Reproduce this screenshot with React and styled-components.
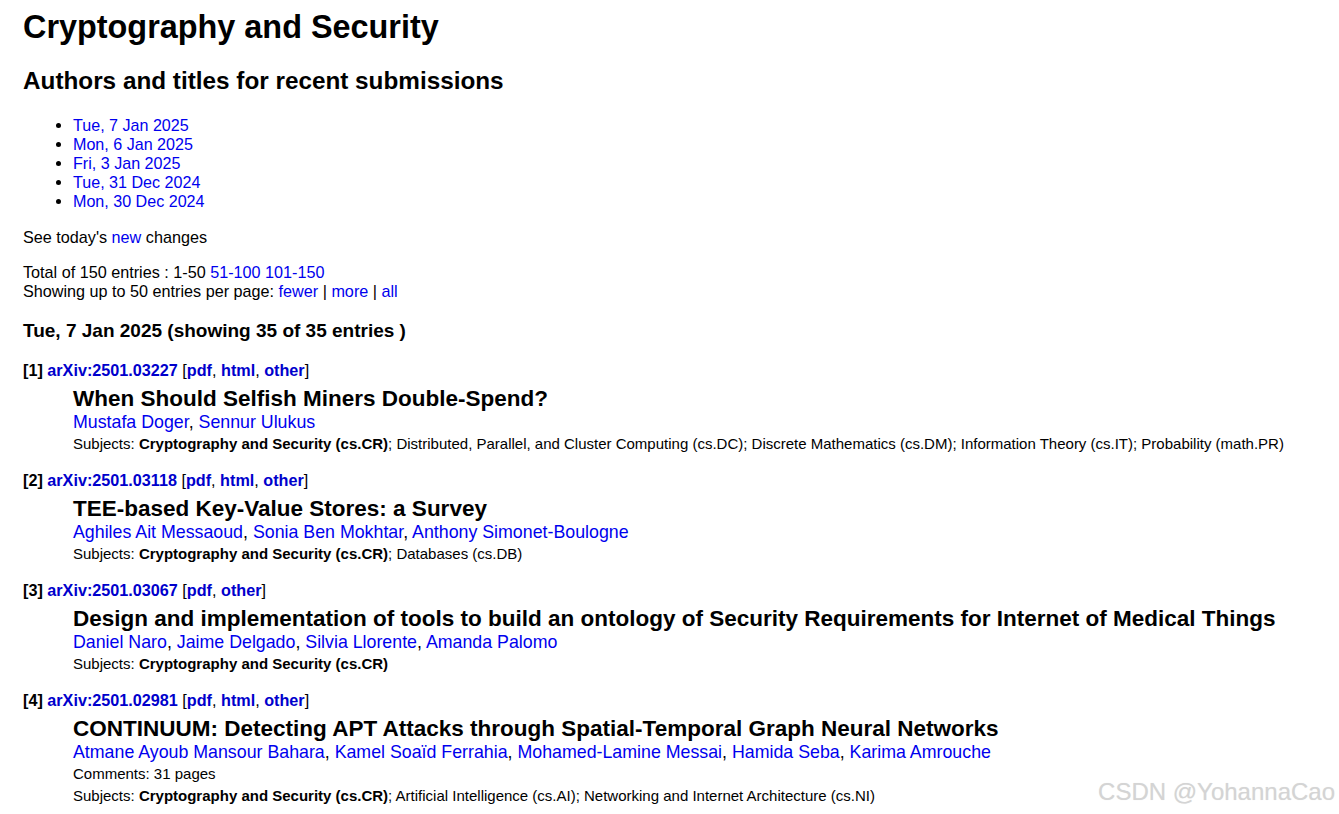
import React from 'react';
import styled, { createGlobalStyle } from 'styled-components';

const GlobalStyle = createGlobalStyle`
html, body {
  margin: 0;
  padding: 0;
  background: #ffffff;
}
body {
  font-family: "Liberation Sans", Arial, sans-serif;
  color: #000000;
}
`

const Page = styled.div`
position: relative;
width: 1339px;
height: 814px;
box-sizing: border-box;
padding: 9px 23px 0 23px;
overflow: hidden;
`

const Title = styled.h1`
margin: 0;
font-size: 32.4px;
line-height: 36px;
font-weight: bold;
`

const SubTitle = styled.h2`
margin: 22px 0 0 0;
font-size: 24.3px;
line-height: 28px;
font-weight: bold;
`

const DateList = styled.ul`
margin: 20.5px 0 0 0;
padding: 0 0 0 50px;
font-size: 16.1px;
line-height: 19px;
`

const Link = styled.a`
color: #0000ee;
text-decoration: none;
`

const Para = styled.p`
margin: ${({ $top }) => $top || 16}px 0 0 0;
font-size: 16.2px;
line-height: 19px;
`

const Sep = styled.span`
color: #000;
`

const DateHeading = styled.h3`
margin: 18px 0 0 0;
font-size: 19px;
line-height: 23px;
font-weight: bold;
`

const EntryList = styled.dl`
margin: 19px 0 0 0;
`

const Entry = styled.div`
margin-bottom: 16px;
`

const Ident = styled.dt`
font-size: 16.2px;
line-height: 19px;
font-weight: bold;
`

const IdLink = styled.a`
color: #0000cc;
text-decoration: none;
font-weight: bold;
`

const Plain = styled.span`
font-weight: normal;
`

const Meta = styled.dd`
margin: 6px 0 0 50px;
`

const PaperTitle = styled.div`
font-size: 22.5px;
line-height: 25px;
font-weight: bold;
`

const Authors = styled.div`
font-size: 17.8px;
line-height: 22px;
`

const MetaLine = styled.div`
font-size: 15px;
line-height: 22px;
`

const Primary = styled.span`
font-weight: bold;
`

const Watermark = styled.div`
position: absolute;
right: 4px;
bottom: 7px;
font-size: 24px;
line-height: 30px;
color: #d4d4d4;
text-shadow: 0 0 1px #e8e8e8;
pointer-events: none;
`

const dates = [
  'Tue, 7 Jan 2025',
  'Mon, 6 Jan 2025',
  'Fri, 3 Jan 2025',
  'Tue, 31 Dec 2024',
  'Mon, 30 Dec 2024',
]

const papers = [
  {
    n: 1,
    id: '2501.03227',
    formats: ['pdf', 'html', 'other'],
    title: 'When Should Selfish Miners Double-Spend?',
    authors: ['Mustafa Doger', 'Sennur Ulukus'],
    subjects: '; Distributed, Parallel, and Cluster Computing (cs.DC); Discrete Mathematics (cs.DM); Information Theory (cs.IT); Probability (math.PR)',
  },
  {
    n: 2,
    id: '2501.03118',
    formats: ['pdf', 'html', 'other'],
    title: 'TEE-based Key-Value Stores: a Survey',
    authors: ['Aghiles Ait Messaoud', 'Sonia Ben Mokhtar', 'Anthony Simonet-Boulogne'],
    subjects: '; Databases (cs.DB)',
  },
  {
    n: 3,
    id: '2501.03067',
    formats: ['pdf', 'other'],
    title: 'Design and implementation of tools to build an ontology of Security Requirements for Internet of Medical Things',
    authors: ['Daniel Naro', 'Jaime Delgado', 'Silvia Llorente', 'Amanda Palomo'],
    subjects: '',
  },
  {
    n: 4,
    id: '2501.02981',
    formats: ['pdf', 'html', 'other'],
    title: 'CONTINUUM: Detecting APT Attacks through Spatial-Temporal Graph Neural Networks',
    authors: ['Atmane Ayoub Mansour Bahara', 'Kamel Soaïd Ferrahia', 'Mohamed-Lamine Messai', 'Hamida Seba', 'Karima Amrouche'],
    comments: '31 pages',
    subjects: '; Artificial Intelligence (cs.AI); Networking and Internet Architecture (cs.NI)',
  },
]

const Paper = ({ paper }) => {
  return (
    <Entry>
      <Ident>
        [{paper.n}] <IdLink href="#">arXiv:{paper.id}</IdLink> <Plain>[</Plain>
        {paper.formats.map((f, i) => (
          <React.Fragment key={f}>
            {i > 0 && <Plain>, </Plain>}
            <IdLink href="#">{f}</IdLink>
          </React.Fragment>
        ))}
        <Plain>]</Plain>
      </Ident>
      <Meta>
        <PaperTitle>{paper.title}</PaperTitle>
        <Authors>
          {paper.authors.map((a, i) => (
            <React.Fragment key={a}>
              {i > 0 && ', '}
              <Link href="#">{a}</Link>
            </React.Fragment>
          ))}
        </Authors>
        {paper.comments && <MetaLine>Comments: {paper.comments}</MetaLine>}
        <MetaLine>
          Subjects: <Primary>Cryptography and Security (cs.CR)</Primary>{paper.subjects}
        </MetaLine>
      </Meta>
    </Entry>
  )
}

export default function App() {
  return (
    <Page>
      <GlobalStyle />
      <Title>Cryptography and Security</Title>
      <SubTitle>Authors and titles for recent submissions</SubTitle>
      <DateList>
        {dates.map(d => (
          <li key={d}><Link href="#">{d}</Link></li>
        ))}
      </DateList>
      <Para $top={17}>See today's <Link href="#">new</Link> changes</Para>
      <Para $top={16}>
        Total of 150 entries : 1-50 <Link href="#">51-100</Link> <Link href="#">101-150</Link>
        <br />
        Showing up to 50 entries per page: <Link href="#">fewer</Link> <Sep>|</Sep> <Link href="#">more</Link> <Sep>|</Sep> <Link href="#">all</Link>
      </Para>
      <DateHeading>Tue, 7 Jan 2025 (showing 35 of 35 entries )</DateHeading>
      <EntryList>
        {papers.map(p => <Paper key={p.id} paper={p} />)}
      </EntryList>
      <Watermark>CSDN @YohannaCao</Watermark>
    </Page>
  )
}
